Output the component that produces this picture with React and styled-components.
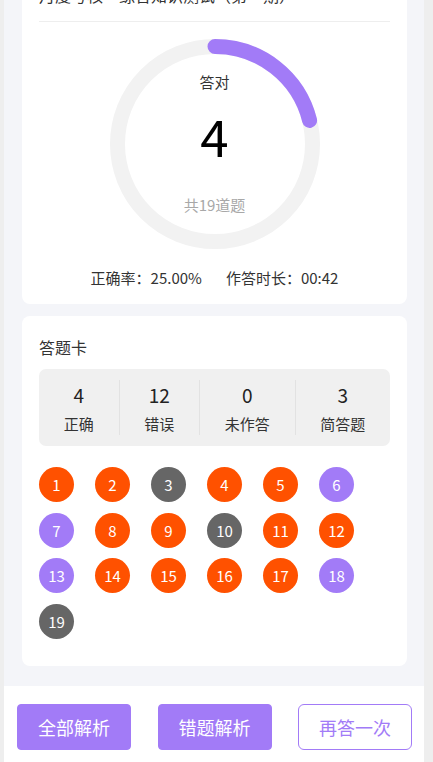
import React from "react"
import styled, { createGlobalStyle } from "styled-components"

const PURPLE = "#a27bf7"
const ORANGE = "#ff5100"
const GRAY = "#666666"

const GlobalStyle = createGlobalStyle`
  html, body {
    margin: 0;
    padding: 0;
    background: #eeeeee;
    font-family: "Noto Sans CJK SC", "Noto Sans", sans-serif;
    color: #333;
  }
`

const Page = styled.div`
  width: 420px;
  margin-left: 4px;
  background: #f4f5f9;
  margin-top: -34px;
`

const Content = styled.div`
  padding: 0 17px 20px 18px;
  display: flex;
  flex-direction: column;
  gap: 12px;
`

const Card = styled.div`
  background: #fff;
  border-radius: 8px;
  padding: ${(p) => p.$pad || "17px 17px 16px"};
`

const TitleRow = styled.div`
  font-size: 16px;
  line-height: 24px;
  color: #333;
  padding-bottom: 14px;
  border-bottom: 1px solid #eeeeee;
  white-space: nowrap;
  overflow: hidden;
`

const RingWrap = styled.div`
  position: relative;
  width: 210px;
  height: 210px;
  margin: 17px auto 0;
`

const RingText = styled.div`
  position: absolute;
  inset: 0;
  display: flex;
  flex-direction: column;
  align-items: center;
`

const RingLabel = styled.div`
  margin-top: 33px;
  font-size: 15px;
  line-height: 20px;
  color: #333;
`

const RingNumber = styled.div`
  margin-top: 8px;
  font-size: 51px;
  line-height: 70px;
  color: #000;
`

const RingTotal = styled.div`
  margin-top: 25px;
  font-size: 15px;
  line-height: 20px;
  color: #a8a8a8;
`

const Summary = styled.div`
  margin-top: 19px;
  display: flex;
  justify-content: center;
  gap: 24px;
  font-size: 15px;
  line-height: 20px;
  color: #333;
`

const CardTitle = styled.div`
  font-size: 16px;
  line-height: 22px;
  color: #333;
`

const StatBox = styled.div`
  margin-top: 11px;
  background: #f0f0f0;
  border-radius: 7px;
  height: 77px;
  display: flex;
  align-items: center;
`

const Stat = styled.div`
  flex: auto;
  display: flex;
  flex-direction: column;
  align-items: center;
  box-sizing: border-box;
  border-left: ${(p) => (p.$first ? "none" : "1px solid #e2e2e2")};
  height: 55px;
  padding-top: 3px;
`

const StatNum = styled.div`
  font-size: 19px;
  line-height: 24px;
  color: #222;
`

const StatLabel = styled.div`
  margin-top: 6px;
  font-size: 15px;
  line-height: 22px;
  color: #333;
`

const Grid = styled.div`
  margin-top: 21px;
  display: grid;
  grid-template-columns: repeat(6, 35px);
  column-gap: 21px;
  row-gap: 10.7px;
`

const Dot = styled.div`
  width: 35px;
  height: 35px;
  border-radius: 50%;
  background: ${(p) => p.$color};
  color: #fff;
  font-size: 15px;
  display: flex;
  align-items: center;
  justify-content: center;
`

const BottomBar = styled.div`
  background: #fff;
  padding: 18px 12px 20px 13px;
  display: flex;
  justify-content: space-between;
`

const Button = styled.button`
  width: 114px;
  height: 46px;
  box-sizing: border-box;
  border-radius: ${(p) => (p.$outline ? "6px" : "4px")};
  border: 1.5px solid ${PURPLE};
  background: ${(p) => (p.$outline ? "#fff" : PURPLE)};
  color: ${(p) => (p.$outline ? PURPLE : "#fff")};
  font-family: inherit;
  font-size: 18px;
  padding: 0;
`

const STATUS = {
  r: PURPLE,
  w: ORANGE,
  n: GRAY,
}

const answers = "wwnwwrrwwnwwrwwwwrn".split("")

const Ring = ({ correct, total }) => {
  const r = 97.5
  const c = 2 * Math.PI * r
  const len = (correct / total) * c
  return (
    <svg width="210" height="210" viewBox="0 0 210 210">
      <circle cx="105" cy="105" r={r} fill="none" stroke="#f2f2f2" strokeWidth="15" />
      <circle
        cx="105"
        cy="105"
        r={r}
        fill="none"
        stroke={PURPLE}
        strokeWidth="15"
        strokeLinecap="round"
        strokeDasharray={`${len} ${c}`}
        transform="rotate(-90 105 105)"
      />
    </svg>
  )
}

const App = () => {
  const stats = [
    { num: 4, label: "正确" },
    { num: 12, label: "错误" },
    { num: 0, label: "未作答" },
    { num: 3, label: "简答题" },
  ]

  return (
    <>
      <GlobalStyle />
      <Page>
        <Content>
          <Card>
            <TitleRow>月度考核·综合知识测试（第一期）</TitleRow>
            <RingWrap>
              <Ring correct={4} total={19} />
              <RingText>
                <RingLabel>答对</RingLabel>
                <RingNumber>4</RingNumber>
                <RingTotal>共19道题</RingTotal>
              </RingText>
            </RingWrap>
            <Summary>
              <span>正确率：25.00%</span>
              <span>作答时长：00:42</span>
            </Summary>
          </Card>
          <Card $pad="20px 17px 27px">
            <CardTitle>答题卡</CardTitle>
            <StatBox>
              {stats.map((s, i) => (
                <Stat key={i} $first={i === 0}>
                  <StatNum>{s.num}</StatNum>
                  <StatLabel>{s.label}</StatLabel>
                </Stat>
              ))}
            </StatBox>
            <Grid>
              {answers.map((a, i) => (
                <Dot key={i} $color={STATUS[a]}>
                  {i + 1}
                </Dot>
              ))}
            </Grid>
          </Card>
        </Content>
        <BottomBar>
          <Button>全部解析</Button>
          <Button>错题解析</Button>
          <Button $outline>再答一次</Button>
        </BottomBar>
      </Page>
    </>
  )
}

export default App
